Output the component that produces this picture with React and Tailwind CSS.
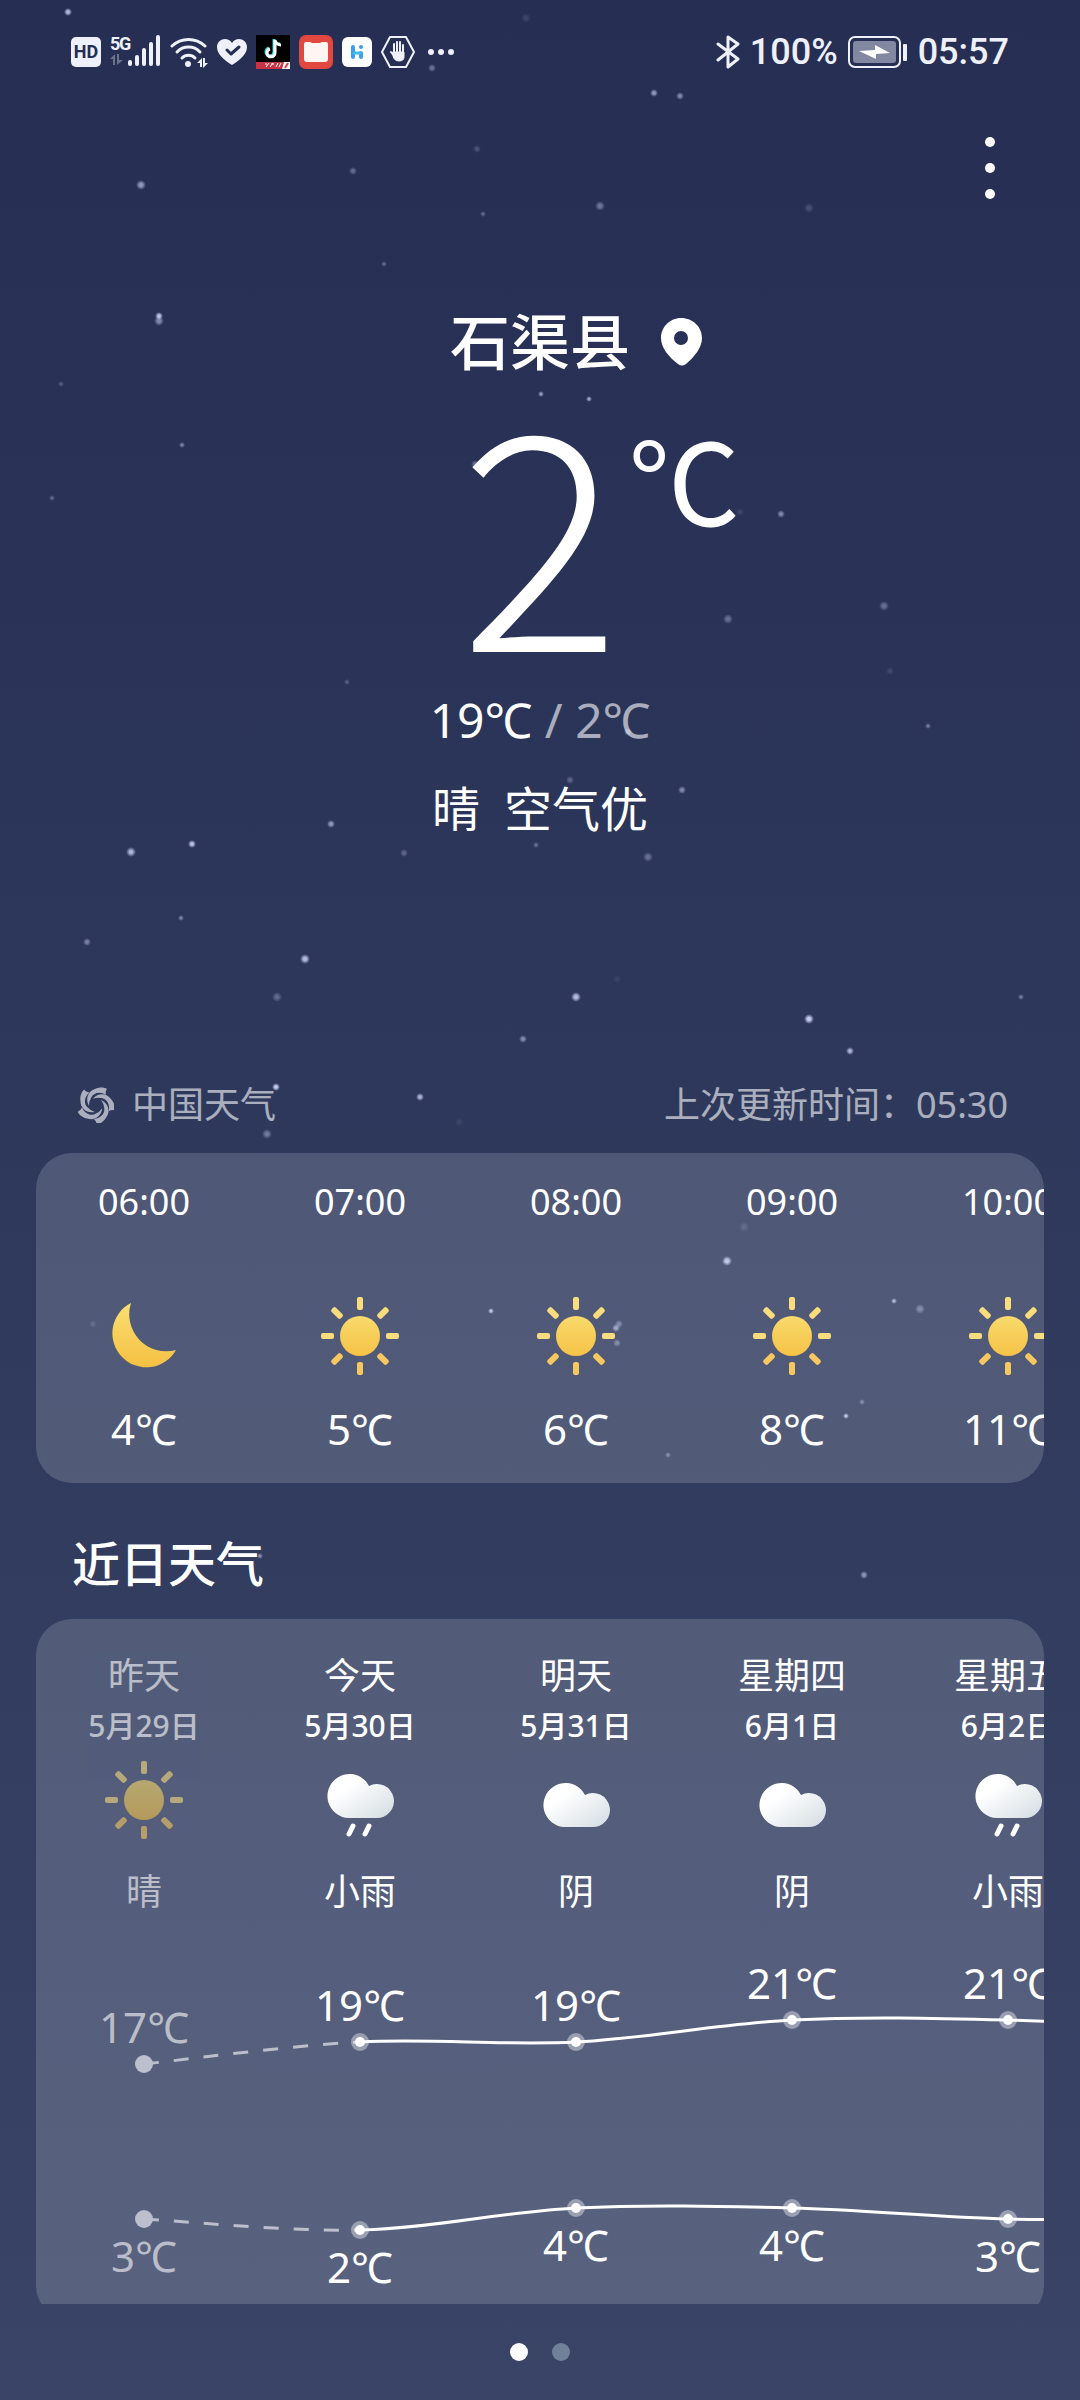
import React from "react";

const DAY_WIDTH = 216;

const hours = [
  { time: "06:00", icon: "moon", temp: 4 },
  { time: "07:00", icon: "sun", temp: 5 },
  { time: "08:00", icon: "sun", temp: 6 },
  { time: "09:00", icon: "sun", temp: 8 },
  { time: "10:00", icon: "sun", temp: 11 },
];

const days = [
  { name: "昨天", date: "5月29日", icon: "sun", text: "晴", high: 17, low: 3, past: true },
  { name: "今天", date: "5月30日", icon: "rain", text: "小雨", high: 19, low: 2 },
  { name: "明天", date: "5月31日", icon: "cloud", text: "阴", high: 19, low: 4 },
  { name: "星期四", date: "6月1日", icon: "cloud", text: "阴", high: 21, low: 4 },
  { name: "星期五", date: "6月2日", icon: "rain", text: "小雨", high: 21, low: 3 },
];

// The curve runs on towards the next, not yet scrolled-in day.
const nextDay = { high: 20, low: 3 };

// x, y, radius, opacity
const stars = [
  [68, 12, 3, 0.8], [526, 18, 4, 0.12], [432, 68, 3, 0.4], [654, 93, 3, 0.6], [680, 96, 3, 0.5],
  [477, 149, 3, 0.2], [353, 171, 3, 0.35], [141, 185, 4, 0.6], [600, 206, 4, 0.4], [483, 214, 2, 0.3],
  [809, 208, 4, 0.18], [384, 264, 2, 0.3], [159, 316, 3, 0.85], [159, 321, 4, 0.5], [61, 384, 2, 0.25],
  [541, 394, 2, 0.6], [589, 399, 2, 0.65], [182, 445, 2, 0.45], [52, 498, 2, 0.3], [475, 464, 3, 0.35],
  [781, 514, 3, 0.5], [740, 512, 3, 0.12], [728, 619, 4, 0.35], [884, 606, 4, 0.35], [890, 671, 3, 0.12],
  [347, 682, 2, 0.25], [928, 726, 2, 0.4], [628, 732, 3, 0.4], [570, 780, 3, 0.3], [682, 790, 3, 0.5],
  [331, 824, 3, 0.6], [192, 844, 3, 0.85], [131, 852, 4, 0.75], [404, 853, 3, 0.3], [536, 845, 2, 0.35],
  [648, 857, 4, 0.35], [181, 918, 2, 0.45], [87, 942, 3, 0.45], [305, 959, 4, 0.8], [277, 997, 4, 0.3],
  [617, 979, 3, 0.08], [576, 997, 4, 0.8], [1021, 997, 2, 0.4], [809, 1019, 4, 0.9], [523, 1039, 3, 0.5],
  [850, 1051, 3, 0.75], [276, 1087, 3, 0.9], [267, 1134, 4, 0.4], [420, 1097, 3, 0.75], [459, 1122, 3, 0.08],
  [93, 1324, 3, 0.15], [491, 1311, 2, 0.8], [744, 1227, 4, 0.15], [727, 1261, 4, 0.85], [894, 1301, 2, 0.7],
  [920, 1309, 4, 0.4], [619, 1324, 3, 0.4], [616, 1328, 3, 0.6], [617, 1343, 3, 0.4], [862, 1402, 2, 0.4],
  [846, 1416, 2, 0.8], [668, 1455, 2, 0.4], [260, 1556, 2, 0.5], [864, 1575, 3, 0.55],
];

function StarField() {
  return (
    <svg className="pointer-events-none absolute inset-0 h-full w-full" aria-hidden="true">
      <defs>
        <radialGradient id="star">
          <stop offset="0.3" stopColor="#d5dcff" />
          <stop offset="1" stopColor="#d5dcff" stopOpacity="0" />
        </radialGradient>
      </defs>
      {stars.map(([x, y, r, o]) => (
        <circle key={`${x}-${y}`} cx={x} cy={y} r={r + 1} fill="url(#star)" opacity={o} />
      ))}
    </svg>
  );
}

function HdIcon() {
  return (
    <span className="flex h-[30px] w-[30px] items-center justify-center rounded-[5px] bg-[#eef0fa] text-[18px] leading-none font-bold text-[#252d52]">
      HD
    </span>
  );
}

function SignalIcon() {
  return (
    <svg className="h-9 w-[51px]" viewBox="0 0 51 36" fill="#eef0fa">
      <text x="0" y="16" fontSize="18" fontWeight="700" fontFamily="Roboto, sans-serif">5</text>
      <text x="9" y="16" fontSize="18" fontWeight="700" fontFamily="Roboto, sans-serif">G</text>
      <path d="M0 25l5-5v11H3v-6zM7 20h2v6h4l-6 5z" opacity="0.35" />
      <rect x="18" y="26" width="4" height="6" rx="2" />
      <rect x="25" y="21" width="4" height="11" rx="2" />
      <rect x="32" y="14" width="4" height="18" rx="2" />
      <rect x="39" y="8" width="4" height="24" rx="2" />
      <rect x="46" y="1" width="4" height="31" rx="2" />
    </svg>
  );
}

function WifiIcon() {
  return (
    <svg className="h-8 w-[38px]" viewBox="0 0 38 32" fill="none" stroke="#eef0fa" strokeWidth="3" strokeLinecap="round">
      <path d="M2 10a24 24 0 0 1 33 0" />
      <path d="M7 16a16 16 0 0 1 23 0" />
      <path d="M12 22a9 9 0 0 1 13 0" />
      <circle cx="18" cy="28" r="3" fill="#eef0fa" stroke="none" />
      <path d="M27 27l5-5v9h-2v-4zM33 22h2v5h3l-5 5z" fill="#eef0fa" stroke="none" />
    </svg>
  );
}

function HeartIcon() {
  return (
    <svg className="h-7 w-[30px]" viewBox="0 0 30 28">
      <path d="M15 27C9 23 0 17 0 9 0 4 4 1 8 1c3 0 5 1 7 4 2-3 4-4 7-4 4 0 8 3 8 8 0 8-9 14-15 18z" fill="#eef0fa" />
      <path d="M10 12l4 4 8-7" fill="none" stroke="#252d52" strokeWidth="3" strokeLinecap="round" strokeLinejoin="round" />
    </svg>
  );
}

function VideoAppIcon() {
  const note = "M17 4v13a4 4 0 1 1-5-4M17 4c0 3 3 5 6 5";
  return (
    <svg className="h-[34px] w-[34px]" viewBox="0 0 34 34">
      <rect width="34" height="34" fill="#000" />
      <g fill="none" strokeWidth="3">
        <path d={note} stroke="#3fd8d8" transform="translate(1 0)" />
        <path d={note} stroke="#fff" transform="translate(2 1)" />
      </g>
      <rect y="27" width="34" height="7" fill="#c93445" />
      <path d="M10 32l3-4M14 32l3-4M15 29h3M20 32l2-4M23 32l2-4M9 29h2" stroke="#fff" strokeWidth="1" />
      <path d="M28 27h6v7h-8z" fill="#fff" />
      <path d="M29 33l3-5" stroke="#e0394a" strokeWidth="2" />
    </svg>
  );
}

function RedAppIcon() {
  return (
    <svg className="h-[34px] w-[34px]" viewBox="0 0 34 34">
      <rect width="34" height="34" rx="7" fill="#e2483f" />
      <path d="M5 9q0-2 2-2h3q2 0 3 1h8q1-1 3-1h3q2 0 2 2v15q0 3-3 3H8q-3 0-3-3z" fill="#fff5f3" />
    </svg>
  );
}

function HiAppIcon() {
  return (
    <svg className="h-[30px] w-[30px]" viewBox="0 0 30 30" fill="none" strokeLinecap="round" strokeWidth="4">
      <rect width="30" height="30" rx="6" fill="#fff" />
      <path d="M11 10v10M19 16v4" stroke="#3f9ee8" />
      <path d="M12 16h6" stroke="#3fbdf0" strokeWidth="3" />
      <circle cx="19" cy="10" r="2" fill="#3f9ee8" />
    </svg>
  );
}

function HandIcon() {
  return (
    <svg className="h-[34px] w-[34px]" viewBox="0 0 34 34" fill="none" stroke="#eef0fa" strokeLinecap="round" strokeLinejoin="round">
      <path d="M9 2h16l8 15-8 15H9L1 17z" strokeWidth="2" />
      <path d="M13 9v9M16 7v10M19 7v10M22 10v9M10 17l4 5" strokeWidth="2" />
      <path d="M12 17h11v5q0 4-5 4t-6-5z" fill="#eef0fa" strokeWidth="1" />
    </svg>
  );
}

function MoreIcon() {
  return (
    <svg className="ml-1 h-[6px] w-[26px]" viewBox="0 0 26 6" fill="#eef0fa">
      <circle cx="3" cy="3" r="3" />
      <circle cx="13" cy="3" r="3" />
      <circle cx="23" cy="3" r="3" />
    </svg>
  );
}

function BluetoothIcon() {
  return (
    <svg className="h-[34px] w-6" viewBox="0 0 24 34" fill="none" stroke="#eef0fa" strokeWidth="3" strokeLinecap="round" strokeLinejoin="round">
      <path d="M2 9l20 15-10 8V2l10 7L2 25" />
    </svg>
  );
}

function BatteryIcon() {
  return (
    <svg className="h-8 w-[60px]" viewBox="0 0 60 32">
      <rect x="1" y="1" width="51" height="30" rx="6" fill="none" stroke="#eef0fa" strokeWidth="2" />
      <rect x="5" y="5" width="43" height="22" rx="3" fill="#8287a2" />
      <path d="M11 15l16-1v-5l15 8-14 1v5z" fill="#fff" />
      <rect x="55" y="8" width="4" height="17" rx="1" fill="#eef0fa" />
    </svg>
  );
}

function StatusBar() {
  return (
    <header className="flex h-[104px] shrink-0 items-center justify-between px-[71px] font-['Roboto',sans-serif] text-[#eef0fa]">
      <div className="flex items-center gap-[9px]">
        <HdIcon />
        <SignalIcon />
        <WifiIcon />
        <HeartIcon />
        <VideoAppIcon />
        <RedAppIcon />
        <HiAppIcon />
        <HandIcon />
        <MoreIcon />
      </div>
      <div className="flex items-center gap-[10px] text-[36px] leading-none font-medium">
        <BluetoothIcon />
        <span>100%</span>
        <BatteryIcon />
        <span>05:57</span>
      </div>
    </header>
  );
}

function PinIcon() {
  return (
    <svg className="h-12 w-[41px]" viewBox="0 0 41 48" role="img" aria-label="当前位置">
      <path
        fill="#fff"
        fillRule="evenodd"
        d="M20 0C32 0 41 9 41 20c0 10-8 19-16 26q-4 3-8 0C8 39 0 30 0 20 0 9 9 0 20 0zM20 13a7 7 0 1 0 0 14 7 7 0 0 0 0-14z"
      />
    </svg>
  );
}

function SwirlIcon() {
  return (
    <svg className="h-9 w-9" viewBox="0 0 36 36" fill="#fff" aria-hidden="true">
      {[0, 72, 144, 216, 288].map((a) => (
        <path key={a} transform={`rotate(${a} 18 18)`} d="M11 19C7 12 10 4 17 2C21 0 26 0 29 2Q27 4 28 8C22 4 15 6 13 11Q11 14 11 19z" />
      ))}
    </svg>
  );
}

function Sun() {
  return (
    <svg className="h-20 w-20" viewBox="0 0 80 80" role="img" aria-label="晴">
      <defs>
        <linearGradient id="sun" x1="0" y1="0" x2="0" y2="80" gradientUnits="userSpaceOnUse">
          <stop offset="0.2" stopColor="#f9dc70" />
          <stop offset="0.8" stopColor="#f5c043" />
        </linearGradient>
      </defs>
      <circle cx="40" cy="40" r="20" fill="url(#sun)" />
      {[0, 45, 90, 135, 180, 225, 270, 315].map((a) => (
        <rect key={a} x="37" y="1" width="6" height="13" rx="2" fill={a > 90 && a < 270 ? "#f7c860" : "#f9dc7c"} transform={`rotate(${a} 40 40)`} />
      ))}
    </svg>
  );
}

function Moon() {
  return (
    <svg className="h-20 w-20" viewBox="0 0 80 80" role="img" aria-label="晴夜">
      <defs>
        <linearGradient id="moon" x1="0" y1="0" x2="0" y2="1">
          <stop offset="0" stopColor="#fadf72" />
          <stop offset="1" stopColor="#f5c043" />
        </linearGradient>
      </defs>
      <path transform="translate(8 7)" fill="url(#moon)" d="M19 0A34 34 0 1 0 64 47A37 37 0 0 1 19 0z" />
    </svg>
  );
}

function CloudShape() {
  return (
    <>
      <defs>
        <linearGradient id="cloud" x1="0" y1="0" x2="1" y2="1">
          <stop offset="0.3" stopColor="#ffffff" />
          <stop offset="1" stopColor="#d3dce2" />
        </linearGradient>
      </defs>
      <path fill="url(#cloud)" d="M22 45A22 22 0 1 1 43 13A17 17 0 1 1 50 45z" />
    </>
  );
}

function Cloud() {
  return (
    <svg className="h-20 w-20" viewBox="0 0 80 80" role="img" aria-label="阴">
      <g transform="translate(6 22)">
        <CloudShape />
      </g>
    </svg>
  );
}

function Rain() {
  return (
    <svg className="h-20 w-20" viewBox="0 0 80 80" role="img" aria-label="小雨">
      <g transform="translate(6 13)">
        <CloudShape />
        <path d="M27 53l-4 8M43 53l-4 8" stroke="#fff" strokeWidth="5" strokeLinecap="round" />
      </g>
    </svg>
  );
}

const icons = { sun: Sun, moon: Moon, cloud: Cloud, rain: Rain };

function CurrentWeather() {
  return (
    <section className="flex flex-col items-center">
      <div className="mt-[74px] grid w-full grid-cols-[1fr_auto_1fr] items-center gap-[31px]">
        <h1 className="col-start-2 text-[60px] leading-[72px] font-medium">石渠县</h1>
        <PinIcon />
      </div>
      <div className="mt-[15px] grid w-full grid-cols-[1fr_auto_1fr] gap-2">
        <span className="col-start-2 font-['Noto_Sans_CJK_SC',sans-serif] text-[300px] leading-[256px] font-light">2</span>
        <span className="pt-6 font-['Noto_Sans_CJK_SC',sans-serif] text-[112px] leading-[120px]">℃</span>
      </div>
      <p className="mt-[35px] text-[48px] leading-[72px]">
        19℃<span className="opacity-60"> / 2℃</span>
      </p>
      <p className="mt-[17px] flex gap-6 text-[48px] leading-[72px]">
        <span>晴</span>
        <span>空气优</span>
      </p>
    </section>
  );
}

function HourlyCard() {
  return (
    <section className="mt-[21px] overflow-hidden rounded-[36px] bg-white/16 pt-[22px] pb-[22px]">
      <ol className="flex">
        {hours.map(({ time, icon, temp }) => {
          const Icon = icons[icon];
          return (
            <li key={time} className="flex w-[216px] shrink-0 flex-col items-center">
              <time className="text-[36px] leading-[54px]">{time}</time>
              <div className="mt-[67px]">
                <Icon />
              </div>
              <span className="mt-[21px] text-[42px] leading-[64px]">{temp}℃</span>
            </li>
          );
        })}
      </ol>
    </section>
  );
}

function curve(points, from, to) {
  let d = `M${points[from][0]} ${points[from][1]}`;
  for (let i = from; i < to; i++) {
    const p0 = points[i - 1] || points[i];
    const p1 = points[i];
    const p2 = points[i + 1];
    const p3 = points[i + 2] || p2;
    d += `C${p1[0] + (p2[0] - p0[0]) / 6} ${p1[1] + (p2[1] - p0[1]) / 6} ${p2[0] - (p3[0] - p1[0]) / 6} ${p2[1] - (p3[1] - p1[1]) / 6} ${p2[0]} ${p2[1]}`;
  }
  return d;
}

function TempLine({ field, y, labelShift }) {
  const points = [...days, nextDay].map((d, i) => [DAY_WIDTH * i + DAY_WIDTH / 2, y(d[field])]);
  return (
    <g>
      <path d={curve(points, 0, 1)} fill="none" stroke="#fff" strokeOpacity="0.6" strokeWidth="3" strokeDasharray="15 15" />
      <path d={curve(points, 1, points.length - 1)} fill="none" stroke="#fff" strokeWidth="3" />
      {days.map((d, i) => (
        <g key={d.date}>
          <circle cx={points[i][0]} cy={points[i][1]} r="9" fill={d.past ? "#bbbfce" : "#fff"} fillOpacity={d.past ? 1 : 0.4} />
          {!d.past && <circle cx={points[i][0]} cy={points[i][1]} r="5" fill="#fff" />}
          <text x={points[i][0]} y={points[i][1] + labelShift} textAnchor="middle" fontSize="42" fill="#fff" fillOpacity={d.past ? 0.6 : 1}>
            {d[field]}℃
          </text>
        </g>
      ))}
    </g>
  );
}

function DailyCard() {
  return (
    <section className="mt-[19px] overflow-hidden rounded-[36px] bg-white/16 pt-[30px]">
      <ol className="flex">
        {days.map(({ name, date, icon, text, past }) => {
          const Icon = icons[icon];
          return (
            <li key={date} className={`flex w-[216px] shrink-0 flex-col items-center ${past ? "opacity-60" : ""}`}>
              <span className="text-[36px] leading-[54px]">{name}</span>
              <span className="text-[30px] leading-[46px] font-medium">{date}</span>
              <div className="mt-[11px]">
                <Icon />
              </div>
              <span className="mt-[25px] text-[36px] leading-[54px]">{text}</span>
            </li>
          );
        })}
      </ol>
      <svg className="block h-[402px] w-[1080px]" viewBox="0 0 1080 402" role="img" aria-label="近日最高和最低气温">
        <TempLine field="high" y={(t) => 332 - 11 * t} labelShift={-21} />
        <TempLine field="low" y={(t) => 333 - 11 * t} labelShift={53} />
      </svg>
    </section>
  );
}

export default function App() {
  return (
    <div className="relative flex h-screen flex-col overflow-hidden bg-linear-to-b from-[#262e53] via-[#2e395c] to-[#394467] font-['Noto_Sans','Noto_Sans_CJK_SC',sans-serif] text-white">
      <StarField />
      <StatusBar />
      <main className="min-h-0 flex-1 overflow-y-auto px-9 [scrollbar-width:none]">
        <div className="flex h-32 items-center justify-end pr-[18px]">
          <button type="button" aria-label="更多" className="flex h-24 w-[72px] flex-col items-center justify-center gap-4">
            <span className="size-[10px] rounded-full bg-white" />
            <span className="size-[10px] rounded-full bg-white" />
            <span className="size-[10px] rounded-full bg-white" />
          </button>
        </div>
        <CurrentWeather />
        <div className="mt-[233px] flex items-center justify-between px-9 text-[36px] leading-[54px] opacity-60">
          <a href="#source" className="flex items-center gap-[18px] pl-[6px]">
            <SwirlIcon />
            中国天气
          </a>
          <span>上次更新时间：05:30</span>
        </div>
        <HourlyCard />
        <h2 className="mt-[45px] px-9 text-[48px] leading-[72px] font-medium">近日天气</h2>
        <DailyCard />
      </main>
      <nav aria-label="城市" className="flex h-24 shrink-0 items-center justify-center gap-6">
        <button type="button" aria-label="城市 1" className="size-[18px] rounded-full bg-white" />
        <button type="button" aria-label="城市 2" className="size-[18px] rounded-full bg-[#728099]" />
      </nav>
    </div>
  );
}
